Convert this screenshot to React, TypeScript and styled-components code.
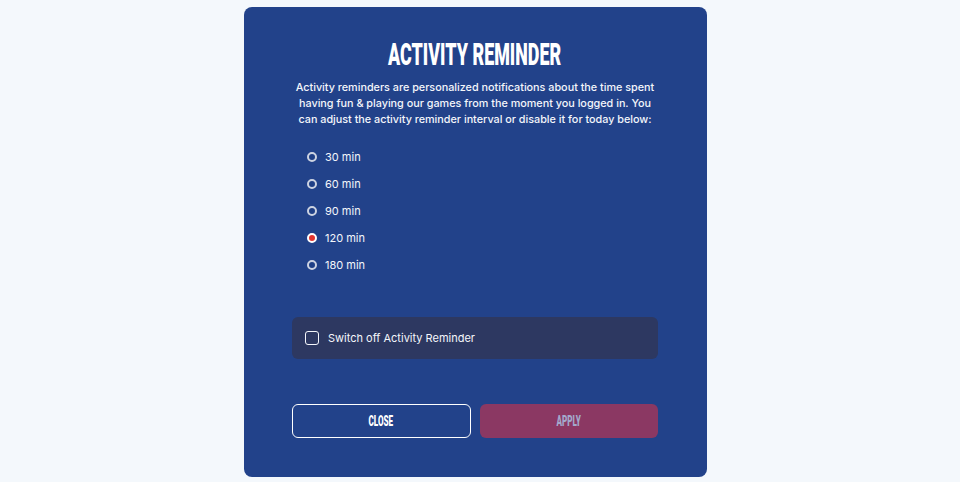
import React, { useState } from "react";
import styled, { createGlobalStyle } from "styled-components";

const GlobalStyle = createGlobalStyle`
  html, body {
    margin: 0;
    padding: 0;
    background: #f4f8fc;
    font-family: Inter, "Noto Sans", sans-serif;
  }
`;

const Page = styled.div`
  min-height: 482px;
  display: flex;
  justify-content: center;
  padding: 7px 9px 0 0;
  box-sizing: border-box;
`;

const Card = styled.div`
  width: 463px;
  height: 470px;
  box-sizing: border-box;
  background: #22428a;
  border-radius: 8px;
  padding: 29px 49px 0 48px;
  display: flex;
  flex-direction: column;
  color: #fff;
`;

const Title = styled.h1`
  margin: 0;
  height: 36px;
  line-height: 36px;
  text-align: center;
  font-family: Roboto, "DejaVu Sans", sans-serif;
  font-weight: 900;
  font-size: 32px;
  span {
    display: inline-block;
    transform: scaleX(0.56);
  }
`;

const Intro = styled.p`
  margin: 8px -20px 0;
  font-size: 10.8px;
  font-weight: 450;
  line-height: 16px;
  text-align: center;
  white-space: nowrap;
  color: #f4f6fb;
`;

const Options = styled.div`
  margin-top: 15px;
  padding-left: 15px;
  display: flex;
  flex-direction: column;
`;

const Option = styled.label`
  height: 27px;
  display: flex;
  align-items: center;
  gap: 8px;
  font-size: 11px;
  color: #f4f6fb;
  cursor: pointer;
`;

const Dot = styled.span<{ $on: boolean }>`
  width: 10px;
  height: 10px;
  box-sizing: border-box;
  border-radius: 50%;
  border: 2px solid ${(p) => (p.$on ? "#ffffff" : "#cdd3e2")};
  background: ${(p) => (p.$on ? "#e3342f" : "#1f3f86")};
`;

const Toggle = styled.label`
  margin-top: 39px;
  height: 42px;
  border-radius: 6px;
  background: #2d3861;
  display: flex;
  align-items: center;
  gap: 9px;
  padding-left: 13px;
  font-size: 11px;
  color: #f4f6fb;
  cursor: pointer;
`;

const Box = styled.span`
  width: 14px;
  height: 14px;
  box-sizing: border-box;
  border: 1.5px solid #f4f6fb;
  border-radius: 3px;
`;

const Buttons = styled.div`
  margin-top: 45px;
  display: grid;
  grid-template-columns: 1fr 1fr;
  gap: 9px;
`;

const Button = styled.button<{ $primary?: boolean }>`
  height: 34px;
  border-radius: 6px;
  box-sizing: border-box;
  border: ${(p) => (p.$primary ? "none" : "1.5px solid #ffffff")};
  background: ${(p) => (p.$primary ? "#8b3863" : "transparent")};
  color: ${(p) => (p.$primary ? "#a3a9cc" : "#ffffff")};
  font-family: Roboto, "DejaVu Sans", sans-serif;
  font-weight: 900;
  font-size: 15px;
  cursor: pointer;
  span {
    display: inline-block;
    transform: scaleX(0.54);
  }
`;

const intervals = [30, 60, 90, 120, 180];

export default function App() {
  const [value, setValue] = useState(120);
  const [off, setOff] = useState(false);

  return (
    <>
      <GlobalStyle />
      <Page>
        <Card>
          <Title>
            <span>ACTIVITY REMINDER</span>
          </Title>
          <Intro>
            Activity reminders are personalized notifications about the time spent
            <br />
            having fun &amp; playing our games from the moment you logged in. You
            <br />
            can adjust the activity reminder interval or disable it for today below:
          </Intro>
          <Options>
            {intervals.map((m) => (
              <Option key={m} onClick={() => setValue(m)}>
                <Dot $on={value === m} />
                {m} min
              </Option>
            ))}
          </Options>
          <Toggle onClick={() => setOff(!off)}>
            <Box />
            Switch off Activity Reminder
          </Toggle>
          <Buttons>
            <Button>
              <span>CLOSE</span>
            </Button>
            <Button $primary>
              <span>APPLY</span>
            </Button>
          </Buttons>
        </Card>
      </Page>
    </>
  );
}
